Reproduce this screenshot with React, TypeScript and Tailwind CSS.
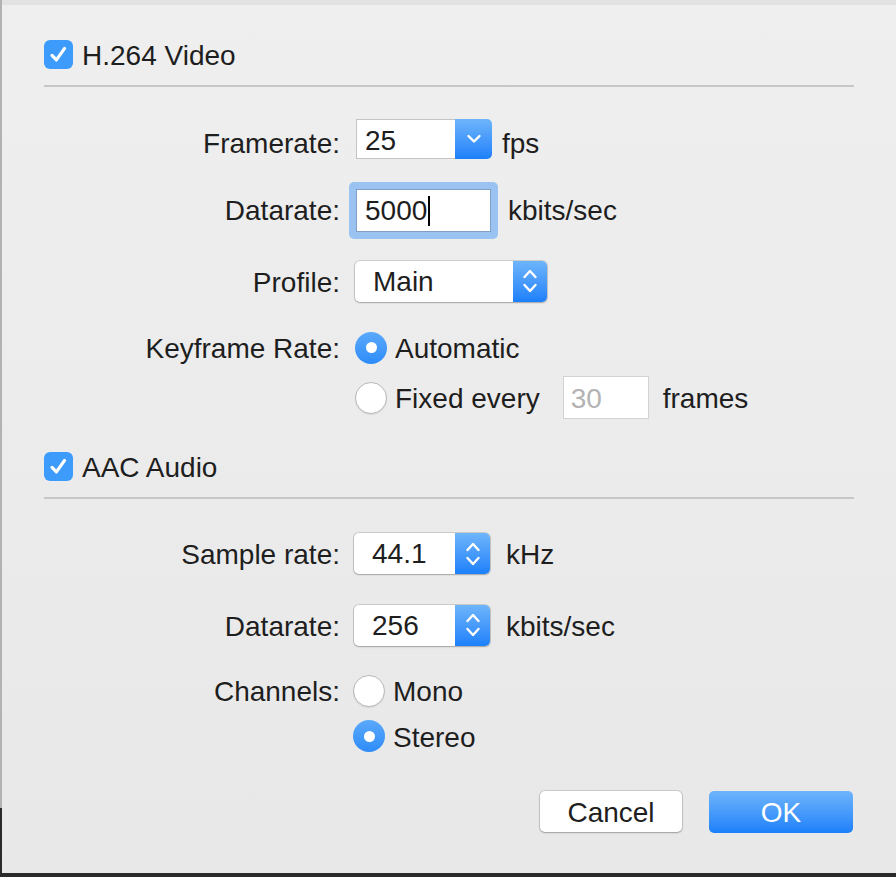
import React from 'react';

const font = { fontFamily: '"Liberation Sans", Arial, sans-serif' };

function CheckBox() {
  return (
    <div className="w-[29px] h-[29px] rounded-[6px] bg-[#3d9bfc] flex items-center justify-center shrink-0">
      <svg width="21" height="21" viewBox="0 0 20 20">
        <path d="M3.8 10.8 L8 15.2 L15.8 4.2" fill="none" stroke="white" strokeWidth="3" strokeLinecap="round" strokeLinejoin="round" />
      </svg>
    </div>
  );
}

function Radio({ on }: { on?: boolean }) {
  if (on) {
    return (
      <div className="w-[32px] h-[32px] rounded-full bg-linear-to-b from-[#5aa9fb] to-[#2d8cf8] flex items-center justify-center shrink-0">
        <div className="w-[11px] h-[11px] rounded-full bg-white" />
      </div>
    );
  }
  return <div className="w-[32px] h-[32px] rounded-full bg-white border border-[#b8b8b8] shadow-[0_1px_1px_rgba(0,0,0,0.08)] shrink-0" />;
}

function UpDown() {
  return (
    <svg width="18" height="30" viewBox="0 0 18 30" className="shrink-0">
      <path d="M3.5 11 L9 5 L14.5 11" fill="none" stroke="white" strokeWidth="2.4" strokeLinecap="round" strokeLinejoin="round" />
      <path d="M3.5 19 L9 25 L14.5 19" fill="none" stroke="white" strokeWidth="2.4" strokeLinecap="round" strokeLinejoin="round" />
    </svg>
  );
}

function Popup({ value, width, btn = 35 }: { value: string; width: number; btn?: number }) {
  return (
    <div
      className="h-[41px] flex rounded-[5px] bg-white shadow-[0_0_0_1px_rgba(0,0,0,0.13),0_1px_2px_rgba(0,0,0,0.2)] overflow-hidden shrink-0"
      style={{ width }}
    >
      <div className="flex-1 flex items-center pl-[18px] pt-[1px]">{value}</div>
      <div className="h-full bg-linear-to-b from-[#6db4fb] to-[#1a80fa] flex items-center justify-center" style={{ width: btn }}>
        <UpDown />
      </div>
    </div>
  );
}

function Row({ label, children, className = '', labelClass = '' }: { label: string; children: React.ReactNode; className?: string; labelClass?: string }) {
  return (
    <div className={`flex items-center ${className}`}>
      <div className={`w-[296px] text-right ${labelClass}`}>{label}</div>
      <div className="ml-[15px] flex items-center">{children}</div>
    </div>
  );
}

function Separator({ className = '' }: { className?: string }) {
  return <div className={`h-[2px] w-[810px] bg-[#c7c7c7] ${className}`} />;
}

export default function App() {
  return (
    <div className="w-[896px] h-[877px] bg-[#2a2a2a] flex text-[28px] text-[#1e1e1e]" style={font}>
      <div className="w-[2px] flex flex-col">
        <div className="h-[808px] bg-[#b2b2b2]" />
      </div>
      <div className="w-[894px] h-[873px] flex flex-col bg-linear-to-b from-[#efefef] to-[#e8e8e8]">
        <div className="h-[5px] bg-[#e2e2e2]" />
        <div className="pl-[42px] flex flex-col">
          <div className="mt-[35px] flex items-center h-[29px]">
            <CheckBox />
            <span className="ml-[9px] pt-[2px]">H.264 Video</span>
          </div>
          <Separator className="mt-[16px]" />

          <Row label="Framerate:" labelClass="pt-[10px]" className="mt-[32px] h-[40px]">
            <div className="ml-[1px] flex h-[40px]">
              <div className="w-[99px] h-full bg-white border border-[#c4c4c4] border-r-0 flex items-center pl-[8px] pt-[4px]">25</div>
              <div className="w-[37px] h-full rounded-r-[5px] bg-linear-to-b from-[#6db4fb] to-[#1a80fa] flex items-center justify-center">
                <svg width="18" height="14" viewBox="0 0 18 14" className="shrink-0">
                  <path d="M3.5 4 L9 9.5 L14.5 4" fill="none" stroke="white" strokeWidth="2.4" strokeLinecap="round" strokeLinejoin="round" />
                </svg>
              </div>
            </div>
            <span className="ml-[10px] pt-[10px]">fps</span>
          </Row>

          <Row label="Datarate:" labelClass="pt-[2px]" className="mt-[22px] h-[58px]">
            <div className="-ml-[6px] p-[7px] rounded-[5px] bg-[#9ac3f2]">
              <div className="w-[135px] h-[43px] bg-white border border-[#7f9fc6] flex items-center pl-[8px] pt-[2px]">
                5000
                <span className="ml-[1px] w-[2px] h-[30px] bg-black" />
              </div>
            </div>
            <span className="ml-[10px] pt-[2px]">kbits/sec</span>
          </Row>

          <Row label="Profile:" labelClass="pt-[3px]" className="mt-[21px] h-[42px]">
            <Popup value="Main" width={192} btn={34} />
          </Row>

          <Row label="Keyframe Rate:" labelClass="pt-[2px]" className="mt-[29px] h-[33px]">
            <Radio on />
            <span className="ml-[8px] pt-[2px]">Automatic</span>
          </Row>
          <Row label="" className="mt-[12px] h-[43px]">
            <Radio />
            <span className="ml-[8px] pt-[2px]">Fixed every</span>
            <div className="ml-[23px] w-[86px] h-[43px] bg-white border border-[#d2d2d2] flex items-center pl-[7px] pt-[2px] text-[#b3b3b3]">30</div>
            <span className="ml-[14px] pt-[2px]">frames</span>
          </Row>

          <div className="mt-[33px] flex items-center h-[29px]">
            <CheckBox />
            <span className="ml-[9px] pt-[2px]">AAC Audio</span>
          </div>
          <Separator className="mt-[16px]" />

          <Row label="Sample rate:" labelClass="pt-[2px]" className="mt-[34px] h-[41px]">
            <div className="-ml-[1px] flex items-center">
              <Popup value="44.1" width={136} />
              <span className="ml-[16px] pt-[2px]">kHz</span>
            </div>
          </Row>
          <Row label="Datarate:" labelClass="pt-[3px]" className="mt-[30px] h-[42px]">
            <div className="-ml-[1px] flex items-center">
              <Popup value="256" width={136} />
              <span className="ml-[16px] pt-[3px]">kbits/sec</span>
            </div>
          </Row>

          <Row label="Channels:" labelClass="pt-[2px]" className="mt-[29px] h-[32px]">
            <div className="-ml-[2px] flex items-center">
              <Radio />
              <span className="ml-[8px] pt-[2px]">Mono</span>
            </div>
          </Row>
          <Row label="" className="mt-[13px] h-[32px]">
            <div className="-ml-[2px] flex items-center">
              <Radio on />
              <span className="ml-[8px] pt-[3px]">Stereo</span>
            </div>
          </Row>

          <div className="mt-[39px] flex justify-end pr-[43px] gap-[27px]">
            <button className="w-[142px] h-[41px] rounded-[5px] bg-white shadow-[0_0_0_1px_rgba(0,0,0,0.12),0_1px_2px_rgba(0,0,0,0.22)] text-[#1e1e1e] pt-[1px]">
              Cancel
            </button>
            <button className="w-[144px] h-[42px] rounded-[5px] bg-linear-to-b from-[#6db4fb] to-[#1a80fa] text-white pt-[1px]">
              OK
            </button>
          </div>
        </div>
      </div>
    </div>
  );
}
